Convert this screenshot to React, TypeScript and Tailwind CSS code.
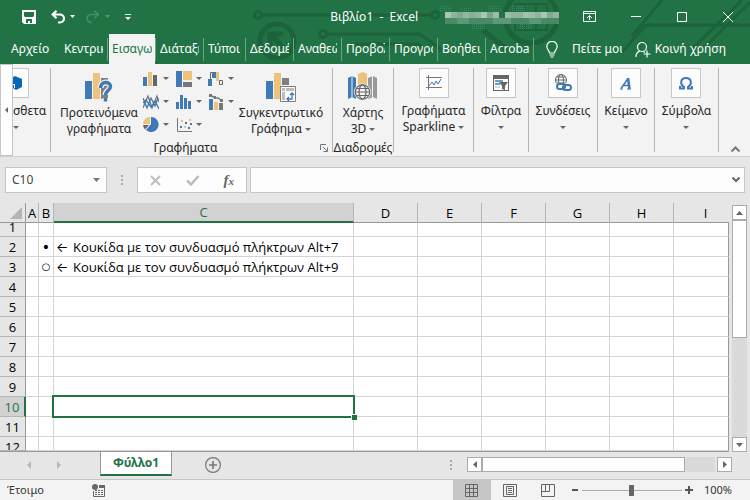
import type { ReactNode } from "react";

const tabs = [
  "Κεντρικ",
  "Εισαγω",
  "Διάταξη",
  "Τύποι",
  "Δεδομέ",
  "Αναθεώ",
  "Προβολ",
  "Προγρα",
  "Βοήθεια",
  "Acrobat",
];

const columns = ["A", "B", "C", "D", "E", "F", "G", "H", "I"];
const rows = [1, 2, 3, 4, 5, 6, 7, 8, 9, 10, 11, 12];

const bullets: Record<number, string> = { 2: "•", 3: "○" };
const notes: Record<number, string> = {
  2: "Κουκίδα με τον συνδυασμό πλήκτρων Alt+7",
  3: "Κουκίδα με τον συνδυασμό πλήκτρων Alt+9",
};

const mosaic = [
  "#a9c6b5", "#8fb59e", "#7fab91", "#93b8a2", "#86af97", "#8fb59e", "#a9c6b5", "#7ba88d", "#9cbdaa",
  "#217346", "#9cbdaa", "#8fb59e", "#8fb59e", "#a3c2b0", "#9cbdaa", "#8fb59e", "#a9c6b5", "#7fab91", "#8fb59e",
];

function Caret() {
  return (
    <svg width="6" height="3" className="inline-block shrink-0 fill-[#666]">
      <path d="M0 0h6L3 3z" />
    </svg>
  );
}

function Logo() {
  return (
    <svg className="absolute top-0 left-[250px]" width="500" height="64" fill="none" stroke="#1c633b" strokeWidth="3">
      <defs>
        <pattern id="dots" width="2" height="2" patternUnits="userSpaceOnUse">
          <path d="M0 0h1v1H0z" fill="#3d8560" stroke="none" />
        </pattern>
      </defs>
      <circle cx="8" cy="15" r="3.500" />
      <path d="M12 15H180" />
      <circle cx="185" cy="15" r="3.500" />
      <circle cx="27" cy="41" r="17" strokeWidth="5" />
      <path d="M36 50L22 36M20 46V34H33" strokeWidth="5" />
      <circle cx="73" cy="34" r="3.500" />
      <path d="M77 34H170L192 50M105 44H168L176 50" />
      <path d="M233 30L258 50" strokeWidth="5" />
      <circle cx="281" cy="17" r="26" strokeWidth="5" />
      <path d="M265 4h32v26h-32zM275 4v26M286 4v26" strokeWidth="2" />
      <path d="M372 52L396 25H500M382 36L412 0M441 50L492 0M452 50L500 2" />
      <path d="M190 6h12v6h-12zM209 8h12v4h-12zM237 6h14v6h-14zM261 6h14v6h-14zM222 24h14v5h-14zM270 24h12v6h-12z" fill="url(#dots)" stroke="none" />
    </svg>
  );
}

function TitleBar() {
  return (
    <div className="relative flex h-[34px] items-center pb-px text-white">
      <div className="flex items-center pl-[22px]">
        <button aria-label="Αποθήκευση">
          <svg width="14" height="14" fill="white">
            <path fillRule="evenodd" d="M0 0h14v14H2l-2-2zM2 2v4l1 1h8l1-1V2zM4 9v4h6V9z" />
            <path d="M6 11h2v2H6z" />
          </svg>
        </button>
        <button aria-label="Αναίρεση" className="ml-[15px] flex items-center gap-[5px]">
          <svg width="14" height="14" viewBox="0 0 14 14" fill="none" stroke="white" strokeWidth="2.200">
            <path d="M1.500 4.500H9a4 4 0 0 1 0 8H7M5.500.800L1.700 4.500l3.800 3.700" />
          </svg>
          <svg width="5" height="3" fill="white"><path d="M0 0h5L2.500 3z" /></svg>
        </button>
        <button aria-label="Ακύρωση αναίρεσης" className="ml-[11px] flex items-center gap-[5px]">
          <svg width="14" height="14" viewBox="0 0 14 14" fill="none" stroke="#579573" strokeWidth="1.500">
            <path d="M12.500 4.500H5a4 4 0 0 0 0 8h1M8.500.800l3.800 3.700-3.800 3.700" strokeDasharray="2 .6" />
          </svg>
          <svg width="5" height="3" fill="#579573"><path d="M0 0h5L2.500 3z" /></svg>
        </button>
        <button aria-label="Προσαρμογή" className="ml-[15px]">
          <svg width="6" height="6" fill="white"><path d="M0 0h6v1H0zM0 3h6L3 6z" /></svg>
        </button>
      </div>
      <h1 className="ml-auto text-[12px]">Βιβλίο1&nbsp; -&nbsp; Excel</h1>
      <svg className="ml-[27px]" width="114" height="14">
        {mosaic.map((color, i) => (
          <rect key={i} x={i * 6} y="2" width="6" height="6" fill={color} />
        ))}
        <rect x="0" y="8" width="114" height="6" fill="#4a8965" />
        <path d="M12 8h12v6H12zM48 8h18v6H48zM84 8h12v6H84z" fill="#5d9777" />
      </svg>
      <div className="ml-[24px] flex items-center pr-[17px]">
        <button aria-label="Επιλογές κορδέλας" className="mr-[35px]">
          <svg width="13" height="11" fill="none" stroke="white"><path d="M.5.5h12v10H.5zM.5 2.500h12M6.500 9V4.500M4 7l2.500-2.500L9 7" /></svg>
        </button>
        <button aria-label="Ελαχιστοποίηση" className="mr-[36px]">
          <svg width="10" height="11" stroke="white"><path d="M0 5.500h10" /></svg>
        </button>
        <button aria-label="Μεγιστοποίηση" className="mr-[36px]">
          <svg width="10" height="10" fill="none" stroke="white"><path d="M.5.5h9v9h-9z" /></svg>
        </button>
        <button aria-label="Κλείσιμο">
          <svg width="10" height="10" stroke="white"><path d="M0 0l10 10M10 0L0 10" /></svg>
        </button>
      </div>
    </div>
  );
}

function TabBar() {
  return (
    <nav className="relative flex h-[30px] text-[12px] text-white">
      <button className="w-[60px] pl-[11px] text-left">Αρχείο</button>
      {tabs.map((tab) => (
        <div key={tab} className="flex items-center">
          <button
            className={
              tab === "Εισαγω"
                ? "ml-px h-full w-[46px] bg-[#f3f3f3] px-[3px] text-[#217346]"
                : tab === "Τύποι"
                ? "w-[41px] px-1"
                : "w-[47px] px-1"
            }
          >
            <span className="block overflow-hidden text-left whitespace-nowrap">{tab}</span>
          </button>
          <span className="h-[23px] w-px bg-[#6ba583]" />
        </div>
      ))}
      <button className="ml-[12px] flex items-center gap-[14px]">
        <svg width="12" height="17" viewBox="0 0 12 17" fill="none" stroke="white" strokeWidth="1.200">
          <path d="M3.500 12c0-2.500-2.700-3.500-2.700-6.500a5.200 5.200 0 0 1 10.400 0c0 3-2.700 4-2.700 6.500zM3.500 14h5M4.500 16h3" />
        </svg>
        <span className="w-[50px] overflow-hidden text-left whitespace-nowrap">Πείτε μου</span>
      </button>
      <button className="ml-auto flex items-center gap-1 pr-6 whitespace-nowrap">
        <svg width="16" height="17" viewBox="0 0 16 17" fill="none" stroke="white" strokeWidth="1.200">
          <circle cx="7" cy="6" r="4.500" />
          <path d="M.8 16c0-3 1.700-5 4-6M8.500 10.500l1.500 1M12 9.500v7M8.500 13h7" />
        </svg>
        Κοινή χρήση
      </button>
    </nav>
  );
}

const chartIcons: { name: string; icon: ReactNode }[] = [
  {
    name: "Στήλες",
    icon: (
      <>
        <path d="M0 6h4v9H0z" fill="#3f7ab5" />
        <path d="M5 1h4v14H5z" fill="#edc27c" />
        <path d="M10 4h4v11h-4z" fill="#666" />
      </>
    ),
  },
  {
    name: "Ιεραρχία",
    icon: (
      <>
        <path d="M0 0h6v16H0z" fill="#3f7ab5" />
        <path d="M7 0h9v9H7z" fill="#edc27c" />
        <path d="M7 11h9v5H7z" fill="#777" />
      </>
    ),
  },
  {
    name: "Καταρράκτης",
    icon: (
      <>
        <path d="M0 8h4v7H0zM4 1h4v6H4z" fill="#3f7ab5" />
        <path d="M8 1h3v9H8z" fill="#edc27c" />
        <path d="M2.500 8V1.500H5M11.500 9.500h3v4h-3z" fill="none" stroke="#666" />
      </>
    ),
  },
  {
    name: "Γραμμές",
    icon: (
      <g fill="none" strokeWidth="1.300">
        <path d="M0 14L5 2l4 12 5-12 2 6" stroke="#777" />
        <path d="M0 4l4 10 4-10 4 8 3-8M0 9l3-3 5 7 4-6 4 8" stroke="#3f7ab5" />
      </g>
    ),
  },
  {
    name: "Στατιστικά",
    icon: <path d="M0 8h3v7H0zM4 1h3v14H4zM8 4h3v11H8zM12 7h3v8h-3z" fill="#3f7ab5" />,
  },
  {
    name: "Συνδυασμός",
    icon: (
      <>
        <path d="M1 5h4v11H1z" fill="#3f7ab5" />
        <path d="M6 8h4v8H6z" fill="#edc27c" />
        <path d="M11 9h4v7h-4z" fill="#777" />
        <path d="M2 1l5 3h3l4 3" fill="none" stroke="#777" strokeWidth="1.500" />
        <path d="M1 0h3v3H1zM6 2h2v3H6zM12 5h3v3h-3z" fill="#777" />
      </>
    ),
  },
  {
    name: "Πίτα",
    icon: (
      <>
        <path d="M8 0a7.500 7.500 0 1 1-5 13l5-6z" fill="#3f7ab5" />
        <path d="M7 0v7H0A7 7 0 0 1 7 0z" fill="#edc27c" />
        <path d="M0 8h6l-4 4.500A7 7 0 0 1 0 8z" fill="#666" />
      </>
    ),
  },
  {
    name: "Διασπορά",
    icon: (
      <>
        <path d="M1.500 1v13.500H16" fill="none" stroke="#777" />
        <path d="M4 9h2v2H4zM9 5h2v2H9zM14 6h2v2h-2zM12 10h2v2h-2z" fill="#3f7ab5" />
        <path d="M5 3h2v2H5zM8 9h2v2H8zM13 2h2v2h-2z" fill="#edc27c" />
      </>
    ),
  },
];

function BoxedGroup({ label, label2, className, children }: { label: string; label2?: string; className: string; children: ReactNode }) {
  return (
    <div className={`flex shrink-0 justify-center border-r border-[#b5b5b5] ${className}`}>
      <button className="flex flex-col items-center leading-4 whitespace-nowrap">
        <span className="mb-[5px] flex h-[30px] w-[30px] items-center justify-center border border-[#c6c6c6] bg-[#fcfcfc]">
          {children}
        </span>
        {label}
        <span className="flex h-4 items-center gap-[3px]">
          {label2}
          <Caret />
        </span>
      </button>
    </div>
  );
}

function Ribbon() {
  return (
    <section className="flex h-[93px] border-b border-[#cfcfcf] bg-[#f3f3f3] text-[12px] text-[#262626]">
      <button aria-label="Κύλιση αριστερά" className="flex w-[13px] shrink-0 items-center justify-center border border-[#c6c6c6] bg-white">
        <svg width="3" height="6" fill="#666"><path d="M3 0v6L0 3z" /></svg>
      </button>
      <div className="flex min-w-0 flex-1 py-1">
        <div className="flex w-[38px] shrink-0 overflow-hidden border-r border-[#b5b5b5]">
          <button className="flex w-[30px] flex-col items-start leading-4 whitespace-nowrap">
            <span className="mb-[5px] flex h-[30px] w-[16px] items-center border border-l-0 border-[#c6c6c6] bg-[#fcfcfc]">
              <svg width="10" height="14" viewBox="0 0 10 14">
                <path d="M2 0l7 3v8l-6 3-3-2V1z" fill="#0a66b7" />
                <path d="M0 8h2v4H0z" fill="white" />
                <path d="M0 9h1v3H0z" fill="#0a66b7" />
              </svg>
            </span>
            σθετα
            <span className="flex h-4 w-full items-center"><Caret /></span>
          </button>
        </div>

        {/* charts */}
        <div className="flex w-[282px] shrink-0 flex-col border-r border-[#b5b5b5]">
          <div className="flex h-[73px] shrink-0">
            <button className="flex w-[84px] flex-col items-center pt-1 pl-3 leading-4">
              <svg width="28" height="30" viewBox="0 0 28 30" className="mb-[3px] shrink-0">
                <path d="M0 9h7v18H0z" fill="#3f7ab5" />
                <path d="M8 1h7v26H8z" fill="#edc27c" />
                <path d="M16 6h7v21h-7z" fill="#7f7f7f" />
                <path d="M15.500 16c0-7 10-7 10-1.500 0 4-5 4-5 8.500M20.500 26v3.500" fill="none" stroke="#f3f3f3" strokeWidth="6" />
                <path d="M15.500 16c0-7 10-7 10-1.500 0 4-5 4-5 8.500M20.500 26v3.500" fill="none" stroke="#3f7ab5" strokeWidth="3.500" />
              </svg>
              <span>Προτεινόμενα γραφήματα</span>
            </button>
            <div className="ml-2 grid w-[98px] grid-cols-3 content-start">
              {chartIcons.map(({ name, icon }) => (
                <button key={name} aria-label={name} className="flex h-[23px] items-center gap-1 pb-[2px]">
                  <svg width="16" height="16">{icon}</svg>
                  <Caret />
                </button>
              ))}
            </div>
            <button className="flex w-[80px] flex-col items-center pt-1 leading-4 whitespace-nowrap">
              <svg width="31" height="30" viewBox="0 0 31 30" className="mb-[3px] shrink-0">
                <path d="M0 9h7v18H0z" fill="#3f7ab5" />
                <path d="M8 1h7v26H8z" fill="#edc27c" />
                <path d="M16 6h7v7h-7z" fill="#7f7f7f" />
                <path d="M14.500 14.500h15v15h-15z" fill="#fcfcfc" stroke="#7f7f7f" />
                <path d="M16 16h3v3h-3zM20 16h8v3h-8zM16 20h3v8h-3z" fill="#bbb" />
                <path d="M21 27h5v-6M23 25l-2 2 2 2M24 23l2-2 2 2" fill="none" stroke="#3f7ab5" strokeWidth="1.300" />
              </svg>
              Συγκεντρωτικό
              <span className="flex items-center gap-[3px]">Γράφημα <Caret /></span>
            </button>
          </div>
          <div className="flex h-[14px] shrink-0 items-center leading-4">
            <span className="flex-1 text-center">Γραφήματα</span>
            <button aria-label="Όλα τα γραφήματα" className="mr-1">
              <svg width="8" height="8" fill="none" stroke="#777"><path d="M.5 6V.5H6M3 3l4 4M7.500 3.500v4h-4" /></svg>
            </button>
          </div>
        </div>

        <div className="flex w-[61px] shrink-0 flex-col items-center border-r border-[#b5b5b5]">
          <button className="flex h-[73px] shrink-0 flex-col items-center pt-1 leading-4 whitespace-nowrap">
            <svg width="30" height="30" viewBox="0 0 30 30" className="mb-[3px] shrink-0">
              <path d="M0 6l4-2 4 2v21l-4-2-4 2z" fill="#3f7ab5" />
              <path d="M10 2l5-2 4 2v22h-9z" fill="#edc27c" />
              <path d="M20 6l5-2 4 2v21l-4-2-5 2z" fill="#999" />
              <path d="M4 4v21M24.500 4v21" stroke="#f3f3f3" />
              <circle cx="14.500" cy="20" r="8.500" fill="#f3f3f3" />
              <g fill="none" stroke="#666" strokeWidth="1.200">
                <circle cx="14.500" cy="20" r="7.200" />
                <ellipse cx="14.500" cy="20" rx="3.500" ry="7.200" />
                <path d="M7.500 20h14M8.500 16.500h12M8.500 23.500h12" />
              </g>
            </svg>
            Χάρτης
            <span className="flex items-center gap-[3px]">3D <Caret /></span>
          </button>
          <span className="flex h-[14px] shrink-0 items-center leading-4">Διαδρομές</span>
        </div>

        <BoxedGroup label="Γραφήματα" label2="Sparkline" className="w-[80px]">
          <svg width="16" height="16" fill="none" stroke="#777">
            <path d="M0 2.500h16M0 12.500h16M2.500 0v15" />
            <path d="M3 11l3-4 2 3 2-4 2 3 3-5" stroke="#3f7ab5" />
          </svg>
        </BoxedGroup>
        <BoxedGroup label="Φίλτρα" className="w-[55px]">
          <svg width="16" height="16" fill="#666">
            <path d="M0 0h16v16H0z" />
            <path d="M1 4h14v11H1z" fill="#fcfcfc" />
            <path d="M2 6h8M2 9h5" stroke="#3f7ab5" strokeWidth="1.500" />
            <path d="M2 12h5" stroke="#bbb" />
            <path d="M6 7h9l-3 4v4l-3-1v-3z" />
          </svg>
        </BoxedGroup>
        <BoxedGroup label="Συνδέσεις" className="w-[69px]">
          <svg width="18" height="18" fill="none" stroke="#666">
            <circle cx="7" cy="6" r="5.500" />
            <ellipse cx="7" cy="6" rx="2.500" ry="5.500" />
            <path d="M1.500 6h11M2.500 3h9M2.500 9h9" />
            <path d="M2 9.500h15v7H2z" fill="#fcfcfc" stroke="none" />
            <g stroke="#3f7ab5" strokeWidth="2">
              <rect x="3" y="10" width="8" height="5" rx="2.500" />
              <rect x="9" y="11" width="8" height="5" rx="2.500" />
            </g>
          </svg>
        </BoxedGroup>
        <BoxedGroup label="Κείμενο" className="w-[57px]">
          <svg width="12" height="13" fill="none" stroke="#3f7ab5">
            <path d="M1 11.500L8 1.500M3 8.500h6" strokeWidth="1.500" />
            <path d="M8 1L9.500 12" strokeWidth="2.500" />
            <path d="M0 12h3M7 12h4" />
          </svg>
        </BoxedGroup>
        <BoxedGroup label="Σύμβολα" className="w-[64px]">
          <svg width="14" height="13" fill="none" stroke="#3f7ab5" strokeWidth="2">
            <path d="M1 9v2.500h4V10C.5 7 1.500 1 7 1s6.500 6 2 9v1.500h4V9" />
          </svg>
        </BoxedGroup>
        <button aria-label="Σύμπτυξη κορδέλας" className="ml-auto self-end pr-[10px]">
          <svg width="9" height="6" fill="none" stroke="#777" strokeWidth="2"><path d="M.5 5.500l4-4 4 4" /></svg>
        </button>
      </div>
    </section>
  );
}

function FormulaBar() {
  return (
    <section className="flex h-[46px] items-start px-[5px] py-[10px]">
      <div className="flex h-[26px] w-[102px] items-center border border-[#c6c6c6] bg-[#fdfdfd] px-[6px]">
        <input aria-label="Πλαίσιο ονόματος" defaultValue="C10" className="min-w-0 flex-1 text-[12px] text-[#444] outline-none" />
        <svg width="7" height="4" fill="#777"><path d="M0 0h7L3.500 4z" /></svg>
      </div>
      <Dots className="mt-2 mr-[14px] ml-[14px]" />
      <div className="flex h-[26px] w-[110px] items-center justify-between border border-[#c6c6c6] bg-[#fdfdfd] px-3">
        <button aria-label="Άκυρο">
          <svg width="12" height="11" stroke="#bdbdbd" strokeWidth="2"><path d="M1 1l9 9M10 1l-9 9" /></svg>
        </button>
        <button aria-label="Εισαγωγή">
          <svg width="14" height="11" fill="none" stroke="#bdbdbd" strokeWidth="2.500"><path d="M1 5.500L5 9.500 12.500 1" /></svg>
        </button>
        <button aria-label="Συνάρτηση" className="font-['Liberation_Serif',serif] text-[15px] leading-4 font-bold text-[#666] italic">
          f<span className="text-[11px]">x</span>
        </button>
      </div>
      <div className="ml-[3px] flex h-[26px] flex-1 items-center border border-[#c6c6c6] bg-[#fdfdfd] pr-1">
        <input aria-label="Γραμμή τύπων" className="min-w-0 flex-1 px-1 text-[12px] outline-none" />
        <svg width="8" height="6" fill="none" stroke="#666" strokeWidth="2"><path d="M.5.5L4 4 7.500.5" /></svg>
      </div>
    </section>
  );
}

function Dots({ className }: { className: string }) {
  return (
    <svg width="2" height="10" fill="#aaa" className={`shrink-0 ${className}`}>
      <path d="M0 0h2v2H0zM0 4h2v2H0zM0 8h2v2H0z" />
    </svg>
  );
}

function Sheet() {
  return (
    <div className="min-w-0 flex-1 overflow-hidden border-b border-[#999] font-['Open_Sans','Noto_Sans',sans-serif]">
      <table className="w-full table-fixed border-separate border-spacing-0 text-[13px]">
        <colgroup>
          <col className="w-[26px]" />
          <col className="w-[13px]" />
          <col className="w-[15px]" />
          <col className="w-[300px]" />
          <col className="w-[64px]" />
          <col className="w-[64px]" />
          <col className="w-[64px]" />
          <col className="w-[64px]" />
          <col className="w-[64px]" />
          <col />
        </colgroup>
        <thead>
          <tr className="h-5">
            <th className="border-r border-b border-[#999] p-0">
              <svg width="12" height="12" className="mr-[3px] ml-auto" fill="#b4b4b4"><path d="M12 0v12H0z" /></svg>
            </th>
            {columns.map((col) => (
              <th
                key={col}
                className={
                  col === "C"
                    ? "border-r border-b-2 border-r-[#b5b5b5] border-b-[#217346] bg-[#d2d2d2] p-0 leading-4 font-normal text-[#217346]"
                    : col === "I"
                    ? "border-b border-[#999] p-0 pl-2 leading-4 font-normal"
                    : "border-r border-b border-r-[#b5b5b5] border-b-[#999] p-0 leading-4 font-normal"
                }
              >
                {col}
              </th>
            ))}
          </tr>
        </thead>
        <tbody>
          {rows.map((row) => (
            <tr key={row}>
              <th
                className={
                  row === 10
                    ? "border-r-2 border-b border-r-[#217346] border-b-[#b5b5b5] bg-[#d2d2d2] p-0 font-normal text-[#217346]"
                    : "border-r border-b border-r-[#999] border-b-[#b5b5b5] p-0 font-normal"
                }
              >
                <div
                  className={
                    row === 1
                      ? "flex h-[13px] flex-col justify-end overflow-hidden leading-[18px]"
                      : row === 12
                      ? "h-[13px] overflow-hidden leading-5"
                      : "h-[19px] leading-5"
                  }
                >
                  {row}
                </div>
              </th>
              {columns.map((col) => (
                <td
                  key={col}
                  className={
                    col === "I"
                      ? "border-r border-b border-r-[#999] border-b-[#d4d4d4] bg-white p-0"
                      : "relative border-r border-b border-[#d4d4d4] bg-white p-0 whitespace-nowrap"
                  }
                >
                  {col === "B" && bullets[row] && (
                    <div
                      className={
                        row === 2
                          ? "flex h-[19px] items-center justify-center font-['DejaVu_Sans',sans-serif] text-[14px] leading-4"
                          : "flex h-[19px] items-center justify-center font-['DejaVu_Sans',sans-serif] text-[10px] leading-4 font-bold"
                      }
                    >
                      {bullets[row]}
                    </div>
                  )}
                  {col === "C" && notes[row] && (
                    <div className="flex h-[19px] items-center gap-1 pl-[2px] leading-5">
                      <span className="w-[13px] font-['Inter',sans-serif] leading-4">←</span>
                      {notes[row]}
                    </div>
                  )}
                  {col + row === "C10" && (
                    <div className="absolute -inset-x-[2px] -inset-y-[2px] z-10 border-2 border-[#217346]">
                      <span className="absolute -right-[4px] -bottom-[4px] h-[6px] w-[6px] border-t border-l border-white bg-[#217346]" />
                    </div>
                  )}
                </td>
              ))}
            </tr>
          ))}
        </tbody>
      </table>
    </div>
  );
}

function VerticalScroll() {
  return (
    <div className="mt-[2px] mr-[3px] ml-[3px] flex w-[15px] flex-col bg-[#dadada]">
      <button aria-label="Πάνω" className="flex h-[15px] shrink-0 items-center justify-center border border-[#ababab] bg-white">
        <svg width="7" height="4" fill="#666"><path d="M0 4h7L3.500 0z" /></svg>
      </button>
      <div className="h-[118px] border border-[#ababab] bg-white" />
      <button aria-label="Κάτω" className="mt-auto flex h-[15px] shrink-0 items-center justify-center border border-[#ababab] bg-white">
        <svg width="7" height="4" fill="#666"><path d="M0 0h7L3.500 4z" /></svg>
      </button>
    </div>
  );
}

function SheetTabs() {
  return (
    <section className="flex h-[28px] border-b border-[#c6c6c6]">
      <div className="flex w-[100px] items-center gap-[26px] pb-[2px] pl-[27px]">
        <button aria-label="Προηγούμενο φύλλο">
          <svg width="4" height="8" fill="#b8b8b8"><path d="M4 0v8L0 4z" /></svg>
        </button>
        <button aria-label="Επόμενο φύλλο">
          <svg width="4" height="8" fill="#b8b8b8"><path d="M0 0v8l4-4z" /></svg>
        </button>
      </div>
      <button className="h-6 w-[72px] border-x border-b-2 border-x-[#999] border-b-[#217346] bg-white text-[12px] font-bold text-[#217346]">
        Φύλλο1
      </button>
      <button aria-label="Νέο φύλλο" className="ml-[33px] pb-[2px]">
        <svg width="16" height="16" fill="none" stroke="#777">
          <circle cx="8" cy="8" r="7.400" strokeWidth="1.200" />
          <path d="M8 4v8M4 8h8" strokeWidth="1.600" />
        </svg>
      </button>
      <div className="ml-auto flex items-center pr-[18px] pb-[2px]">
        <Dots className="mr-[15px]" />
        <button aria-label="Αριστερά" className="flex h-[15px] w-[15px] items-center justify-center border border-[#ababab] bg-white">
          <svg width="4" height="7" fill="#666"><path d="M4 0v7L0 3.500z" /></svg>
        </button>
        <div className="mr-[2px] h-[15px] w-[233px] bg-[#dadada]">
          <div className="h-full w-[203px] border border-[#ababab] bg-white" />
        </div>
        <button aria-label="Δεξιά" className="flex h-[15px] w-[15px] items-center justify-center border border-[#ababab] bg-white">
          <svg width="4" height="7" fill="#666"><path d="M0 0v7l4-3.500z" /></svg>
        </button>
      </div>
    </section>
  );
}

function StatusBar() {
  return (
    <footer className="flex h-[21px] items-center bg-[#f3f3f3] pr-[18px] pb-px pl-[7px] text-[11px] text-[#333]">
      <span className="w-[85px]">Έτοιμο</span>
      <button aria-label="Εγγραφή μακροεντολής">
        <svg width="13" height="13" fill="#666">
          <circle cx="3" cy="3" r="3" />
          <path d="M7 1h6v3H7z" />
          <path d="M1.500 7v5.500h11V3" fill="none" stroke="#666" />
          <path d="M3 6.500h8M3 8.500h8M3 10.500h8" stroke="#666" strokeDasharray="2 1" />
        </svg>
      </button>
      <div className="ml-auto flex h-full items-center">
        <button aria-label="Κανονική" className="flex h-[21px] w-[38px] items-center justify-center bg-[#c6c6c6]">
          <svg width="13" height="13" fill="none" stroke="#666"><path d="M.5.500h12v12H.5zM.5 4.500h12M.5 8.500h12M4.500 0v13M8.500 0v13" /></svg>
        </button>
        <button aria-label="Διάταξη σελίδας" className="flex h-full w-[38px] items-center justify-center">
          <svg width="14" height="13" fill="none" stroke="#666"><path d="M.5.500h13v12H.5zM3.500 2.500h7v8h-7zM5 4.500h4M5 6.500h4M5 8.500h4" /></svg>
        </button>
        <button aria-label="Προεπισκόπηση" className="flex h-full w-[38px] items-center justify-center">
          <svg width="14" height="13" fill="none" stroke="#666"><path d="M.5.500h13v12H.5zM.5 7.500h8V.5M4.500 0v7" /></svg>
        </button>
        <button aria-label="Σμίκρυνση" className="ml-[5px]">
          <svg width="6" height="8" stroke="#555" strokeWidth="2"><path d="M0 4h6" /></svg>
        </button>
        <input
          type="range"
          aria-label="Ζουμ"
          defaultValue="50"
          className="mr-[3px] ml-1 h-3 w-[100px] appearance-none bg-transparent [&::-webkit-slider-runnable-track]:h-px [&::-webkit-slider-runnable-track]:bg-[#aaa] [&::-webkit-slider-thumb]:-mt-[5px] [&::-webkit-slider-thumb]:h-[11px] [&::-webkit-slider-thumb]:w-[5px] [&::-webkit-slider-thumb]:appearance-none [&::-webkit-slider-thumb]:bg-[#666]"
        />
        <button aria-label="Μεγέθυνση">
          <svg width="8" height="8" stroke="#555" strokeWidth="2"><path d="M0 4h8M4 0v8" /></svg>
        </button>
        <span className="ml-[11px]">100%</span>
      </div>
    </footer>
  );
}

export default function App() {
  return (
    <main className="flex min-h-screen flex-col overflow-hidden bg-[#e6e6e6] font-['Noto_Sans','Open_Sans',sans-serif] text-black">
      <header className="relative bg-[#217346]">
        <Logo />
        <TitleBar />
        <TabBar />
      </header>
      <Ribbon />
      <FormulaBar />
      <div className="flex">
        <Sheet />
        <VerticalScroll />
      </div>
      <SheetTabs />
      <StatusBar />
    </main>
  );
}
